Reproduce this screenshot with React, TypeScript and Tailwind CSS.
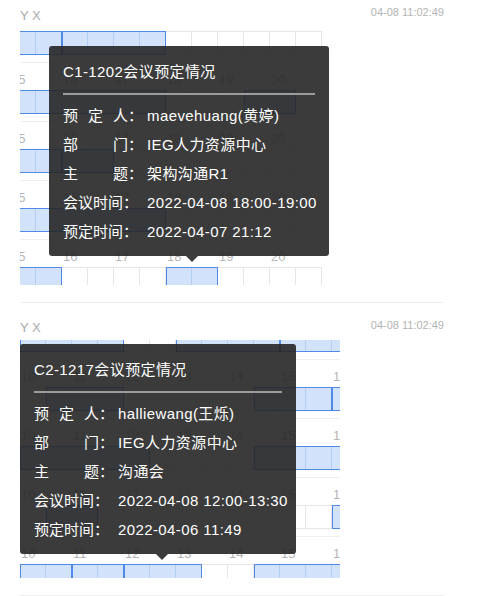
import React from 'react';

type Block = [number, number];

type Card = {
  hours: number[];
  rows: Block[][];
};

const card1: Card = {
  hours: [15, 16, 17, 18, 19, 20],
  rows: [
    [[0, 2], [2, 6]],
    [[0, 6], [9, 11]],
    [[0, 2], [2, 4]],
    [[0, 6]],
    [[0, 2], [6, 8]],
  ],
};

const card2: Card = {
  hours: [10, 11, 12, 13, 14, 15, 16],
  rows: [
    [[0, 4], [6, 10], [10, 14]],
    [[1, 4], [9, 12], [12, 14]],
    [[0, 5], [9, 14]],
    [[1, 3], [12, 14]],
    [[0, 2], [2, 4], [4, 7], [9, 14]],
  ],
};

function CellRow({ cols, blocks }: { cols: number; blocks: Block[] }) {
  const items: React.ReactNode[] = [];
  let c = 0;
  while (c < cols) {
    const b = blocks.find((x) => x[0] === c);
    if (b) {
      const n = b[1] - b[0];
      items.push(
        <div
          key={c}
          className="flex h-[24px] shrink-0 border-y border-r border-[#4e8ae6] bg-[#d2e2fb] shadow-[inset_1px_0_0_#4e8ae6]"
          style={{ width: n * 26 }}
        >
          {Array.from({ length: n }).map((_, i) => (
            <div key={i} className={i < n - 1 ? 'flex-1 border-r border-[#b4cdf4]' : 'flex-1'} />
          ))}
        </div>
      );
      c = b[1];
    } else {
      items.push(
        <div
          key={c}
          className={
            c === 0
              ? 'h-[24px] w-[26px] shrink-0 border border-[#e6e6e6]'
              : 'h-[24px] w-[26px] shrink-0 border-y border-r border-[#e6e6e6]'
          }
        />
      );
      c++;
    }
  }
  return <div className="flex">{items}</div>;
}

function Grid({ card }: { card: Card }) {
  const cols = card.hours.length * 2;
  return (
    <div style={{ width: cols * 26 }}>
      {card.rows.map((blocks, r) => (
        <div key={r}>
          <div className="pt-[7px]">
            <div className="flex h-[28px] border-t border-[#eeeeee]">
              {card.hours.map((h) => (
                <div key={h} className="w-[52px] shrink-0 pl-[1px] pt-[10px] text-[13px] leading-[14px] text-[#b5b5b5]">
                  {h}
                </div>
              ))}
            </div>
          </div>
          <CellRow cols={cols} blocks={blocks} />
        </div>
      ))}
    </div>
  );
}

function Label({ text }: { text: string }) {
  const chars = [...text];
  return (
    <span className="flex w-[84px] shrink-0">
      {chars.length < 4 ? (
        <span className="flex w-[65px] justify-between">
          {chars.map((ch, i) => (
            <span key={i}>{ch}</span>
          ))}
        </span>
      ) : (
        <span>{text}</span>
      )}
      <span>：</span>
    </span>
  );
}

function Tooltip({
  title,
  rows,
  className,
  arrowClass,
}: {
  title: string;
  rows: [string, string][];
  className: string;
  arrowClass: string;
}) {
  return (
    <div className={`absolute z-10 rounded-[3px] bg-[rgba(38,38,38,0.9)] px-[14px] pt-[11px] pb-[9px] text-[15px] text-white ${className}`}>
      <div className="leading-[29px] tracking-[0.4px] whitespace-nowrap">{title}</div>
      <div className="mt-[7px] h-[2px] bg-[#9c9c9c]" />
      <div className="mt-[7px]">
        {rows.map(([k, v]) => (
          <div key={k} className="flex h-[29px] items-center whitespace-nowrap">
            <Label text={k} />
            <span className="tracking-[0.4px]">{v}</span>
          </div>
        ))}
      </div>
      <div className={`absolute top-full h-0 w-0 border-x-[6px] border-t-[6px] border-x-transparent border-t-[rgba(38,38,38,0.9)] ${arrowClass}`} />
    </div>
  );
}

export default function App() {
  return (
    <div className="min-h-screen bg-white font-['Liberation_Sans','Noto_Sans_CJK_SC',sans-serif]">
      <div className="w-[444px] pl-[20px]">
        {/* first room */}
        <div className="relative">
          <div className="flex h-[28px] items-start justify-between">
            <span className="mt-[8px] text-[13px] leading-[16px] text-[#aaaaaa]">Y X</span>
            <span className="mt-[5px] text-[11px] leading-[14px] text-[#b3b3b3]">04-08 11:02:49</span>
          </div>
          <div className="h-[257px] w-[320px] overflow-hidden">
            <div className="-mt-[32px] -ml-[10px]">
              <Grid card={card1} />
            </div>
          </div>
          <div className="mt-[17px] border-t border-[#eeeeee]" />
          <Tooltip
            className="left-[29px] top-[46px] w-[280px]"
            arrowClass="left-[137px]"
            title="C1-1202会议预定情况"
            rows={[
              ['预定人', 'maevehuang(黄婷)'],
              ['部门', 'IEG人力资源中心'],
              ['主题', '架构沟通R1'],
              ['会议时间', '2022-04-08 18:00-19:00'],
              ['预定时间', '2022-04-07 21:12'],
            ]}
          />
        </div>

        {/* second room */}
        <div className="relative">
          <div className="flex h-[37px] items-start justify-between">
            <span className="mt-[17px] text-[13px] leading-[16px] text-[#aaaaaa]">Y X</span>
            <span className="mt-[15px] text-[11px] leading-[14px] text-[#b3b3b3]">04-08 11:02:49</span>
          </div>
          <div className="h-[238px] w-[320px] overflow-hidden">
            <div className="-mt-[47px]">
              <Grid card={card2} />
            </div>
          </div>
          <div className="mt-[17px] border-t border-[#eeeeee]" />
          <Tooltip
            className="left-0 top-[41px] w-[276px]"
            arrowClass="left-[136px]"
            title="C2-1217会议预定情况"
            rows={[
              ['预定人', 'halliewang(王烁)'],
              ['部门', 'IEG人力资源中心'],
              ['主题', '沟通会'],
              ['会议时间', '2022-04-08 12:00-13:30'],
              ['预定时间', '2022-04-06 11:49'],
            ]}
          />
        </div>
      </div>
    </div>
  );
}
